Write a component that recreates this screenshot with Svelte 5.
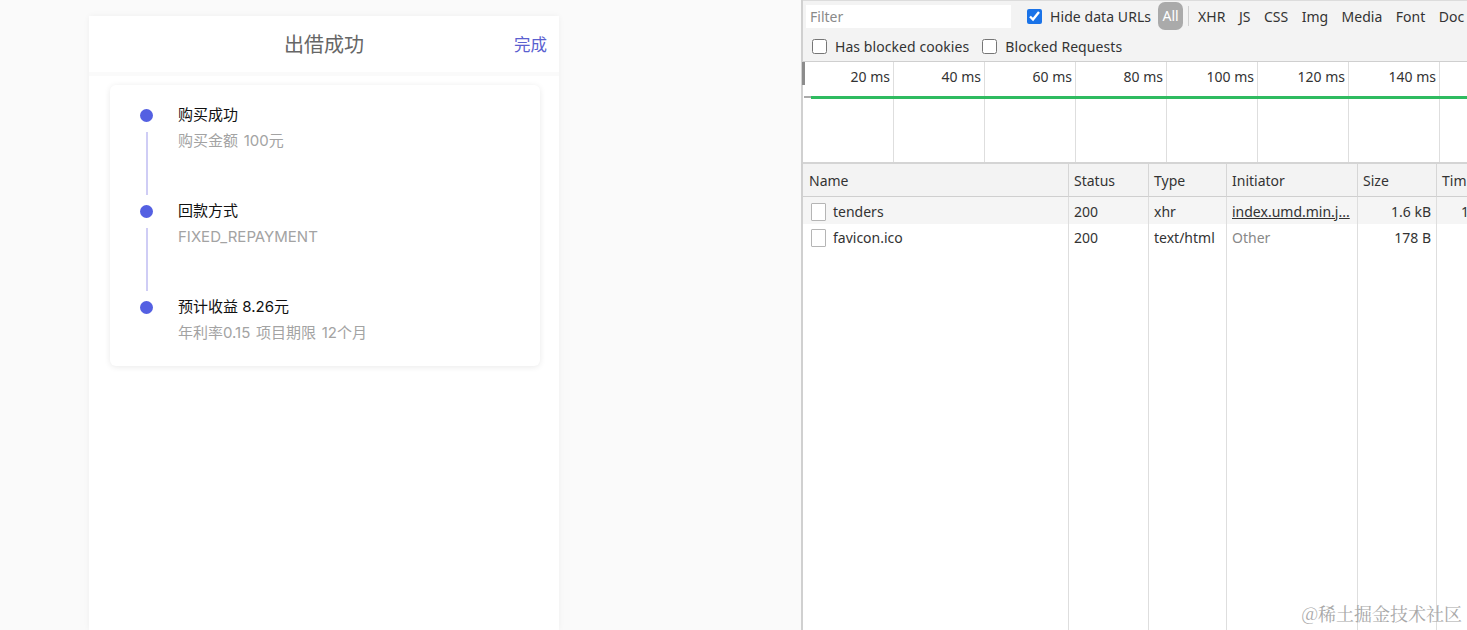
<script>
  const steps = [
    { title: '购买成功', sub: '购买金额 100元' },
    { title: '回款方式', sub: 'FIXED_REPAYMENT' },
    { title: '预计收益 8.26元', sub: '年利率0.15 项目期限 12个月' }
  ];
  const types = ['XHR', 'JS', 'CSS', 'Img', 'Media', 'Font', 'Doc'];
  const ticks = ['20 ms', '40 ms', '60 ms', '80 ms', '100 ms', '120 ms', '140 ms'];
  const rows = [
    { name: 'tenders', status: '200', type: 'xhr', initiator: 'index.umd.min.j...', size: '1.6 kB', time: '1', link: true },
    { name: 'favicon.ico', status: '200', type: 'text/html', initiator: 'Other', size: '178 B', time: '', link: false }
  ];
</script>

<div class="page">
  <section class="left">
    <div class="phone">
      <header class="nav">
        <h1>出借成功</h1>
        <span class="done">完成</span>
      </header>
      <div class="body">
        <div class="card">
          {#each steps as step, i}
            <div class="step">
              <div class="rail">
                <span class="dot"></span>
                {#if i < steps.length - 1}<span class="line"></span>{/if}
              </div>
              <div class="copy">
                <div class="title">{step.title}</div>
                <div class="sub">{step.sub}</div>
              </div>
            </div>
          {/each}
        </div>
      </div>
    </div>
  </section>

  <section class="devtools">
    <div class="toolbar">
      <div class="bar-row">
        <div class="filter">Filter</div>
        <label class="check first"><input type="checkbox" checked />Hide data URLs</label>
        <span class="all">All</span>
        <span class="sep"></span>
        {#each types as t}
          <span class="type-btn">{t}</span>
        {/each}
      </div>
      <div class="bar-row second">
        <label class="check"><input type="checkbox" />Has blocked cookies</label>
        <label class="check"><input type="checkbox" />Blocked Requests</label>
      </div>
    </div>

    <div class="overview">
      <span class="handle"></span>
      <span class="stub"></span>
      <span class="green"></span>
      {#each ticks as t}
        <div class="tick">{t}</div>
      {/each}
      <div class="tick"></div>
    </div>

    <div class="table">
      <div class="th first-col">Name</div>
      <div class="th">Status</div>
      <div class="th">Type</div>
      <div class="th">Initiator</div>
      <div class="th">Size</div>
      <div class="th">Tim</div>
      {#each rows as r, i}
        <div class="td name" class:odd={i === 0}><span class="file"></span>{r.name}</div>
        <div class="td" class:odd={i === 0}>{r.status}</div>
        <div class="td" class:odd={i === 0}>{r.type}</div>
        <div class="td" class:odd={i === 0} class:link={r.link} class:muted={!r.link}>{r.initiator}</div>
        <div class="td right" class:odd={i === 0}>{r.size}</div>
        <div class="td right" class:odd={i === 0}>{r.time}</div>
      {/each}
      {#each Array(6) as _}
        <div class="fill"></div>
      {/each}
    </div>
    <div class="watermark">@稀土掘金技术社区</div>
  </section>
</div>

<style>
  :global(body) {
    margin: 0;
    background: #fff;
    overflow: hidden;
  }

  .page {
    display: flex;
    width: 1467px;
    height: 630px;
    overflow: hidden;
    font-family: 'Noto Sans', 'Noto Sans CJK SC', sans-serif;
  }

  .left {
    width: 801px;
    flex: none;
    box-sizing: border-box;
    padding: 16px 0 0 89px;
    background: #fafafa;
  }

  .phone {
    width: 470px;
    height: 614px;
    display: flex;
    flex-direction: column;
    gap: 4px;
    box-shadow: 0 0 6px rgba(0, 0, 0, 0.05);
    border-radius: 3px 3px 0 0;
    font-family: 'Inter', 'Noto Sans CJK SC', sans-serif;
  }

  .nav {
    height: 56px;
    box-sizing: border-box;
    padding-bottom: 2px;
    background: #fff;
    display: flex;
    align-items: center;
    justify-content: center;
    position: relative;
    flex: none;
  }

  h1 {
    margin: 0;
    font-size: 20px;
    font-weight: 400;
    color: #666;
  }

  .done {
    position: absolute;
    right: 12px;
    top: 17px;
    font-size: 16.5px;
    line-height: 24px;
    color: #5a60cf;
  }

  .body {
    flex: 1;
    background: #fff;
    padding: 9px 19px 0 21px;
  }

  .card {
    height: 281px;
    box-sizing: border-box;
    padding: 17px 0 0 30px;
    background: #fff;
    border-radius: 6px;
    box-shadow: 0 1px 6px rgba(0, 0, 0, 0.09);
  }

  .step {
    display: flex;
    height: 96px;
  }

  .rail {
    width: 13px;
    display: flex;
    flex-direction: column;
    align-items: center;
    flex: none;
  }

  .dot {
    width: 13px;
    height: 13px;
    margin-top: 7px;
    border-radius: 50%;
    background: #5460e2;
    flex: none;
  }

  .line {
    width: 2px;
    height: 63px;
    margin-top: 10px;
    background: #cfcdf5;
  }

  .copy {
    margin-left: 25px;
    font-size: 15px;
    line-height: 26px;
  }

  .title {
    color: #111;
  }

  .sub {
    color: #a3a3a3;
    word-spacing: 1.5px;
  }

  .devtools {
    flex: 1;
    min-width: 0;
    display: flex;
    flex-direction: column;
    position: relative;
    border-left: 2px solid #d0d0d0;
    background: #fff;
    font-size: 14px;
    color: #333;
  }

  .toolbar {
    height: 62px;
    box-sizing: border-box;
    background: #f3f3f3;
    border-top: 1px solid #dcdcdc;
    border-bottom: 1px solid #cfcfcf;
    flex: none;
    padding-top: 1px;
  }

  .bar-row {
    display: flex;
    align-items: center;
    height: 28px;
    white-space: nowrap;
    padding-left: 3px;
  }

  .bar-row > * {
    flex: none;
  }

  .bar-row.second {
    margin-top: 2px;
    padding-left: 9px;
    gap: 13px;
  }

  .filter {
    width: 201px;
    height: 23px;
    padding-left: 4px;
    line-height: 23px;
    background: #fff;
    color: #8a8a8a;
  }

  .check {
    display: flex;
    align-items: center;
    letter-spacing: 0.07px;
  }

  .check.first {
    margin-left: 16px;
  }

  input {
    width: 15px;
    height: 15px;
    margin: 0 8px 0 0;
    accent-color: #1a73e8;
  }

  .all {
    width: 25px;
    height: 28px;
    margin-left: 7px;
    border-radius: 7px;
    background: #aaa;
    color: #fff;
    line-height: 28px;
    text-align: center;
  }

  .sep {
    width: 1px;
    height: 20px;
    margin: 0 9px 0 5px;
    background: #d0d0d0;
  }

  .type-btn {
    margin-right: 13.5px;
    color: #333;
  }

  .overview {
    height: 100px;
    flex: none;
    display: flex;
    position: relative;
    border-bottom: 2px solid #d4d4d4;
  }

  .handle {
    position: absolute;
    left: -1px;
    top: 0;
    width: 3px;
    height: 23px;
    background: #8c8c8c;
  }

  .stub {
    position: absolute;
    left: 1px;
    top: 34px;
    width: 8px;
    height: 2px;
    background: #aaa;
  }

  .green {
    position: absolute;
    left: 8px;
    right: 0;
    top: 34px;
    height: 3px;
    background: #2fbb60;
    z-index: 1;
  }

  .tick {
    width: 91px;
    flex: none;
    box-sizing: border-box;
    padding: 5px 3px 0 0;
    text-align: right;
    line-height: 20px;
    border-right: 1px solid #dedede;
    white-space: nowrap;
    color: #333;
  }

  .table {
    flex: 1;
    min-height: 0;
    display: grid;
    grid-template-columns: 266px 80px 78px 131px 79px 38px;
    grid-template-rows: 33px 27px 26px 1fr;
  }

  .th {
    background: #f3f3f3;
    border-bottom: 1px solid #cfcfcf;
    border-right: 1px solid #d6d6d6;
    padding-left: 5px;
    line-height: 34px;
    white-space: nowrap;
    overflow: hidden;
  }

  .th.first-col {
    padding-left: 6px;
  }

  .td {
    padding: 2px 5px 0;
    line-height: 24px;
    border-right: 1px solid #dedede;
    white-space: nowrap;
    overflow: hidden;
  }

  .td.odd {
    padding-top: 3px;
    background: #f5f5f5;
  }

  .td.right {
    text-align: right;
  }

  .td.link {
    text-decoration: underline;
  }

  .td.muted {
    color: #888;
  }

  .td.name {
    display: flex;
    align-items: center;
    padding-left: 8px;
  }

  .file {
    width: 13px;
    height: 16px;
    margin-right: 7px;
    background: #fff;
    border: 1px solid #b5b5b5;
    border-radius: 1px;
    flex: none;
  }

  .fill {
    border-right: 1px solid #dedede;
  }

  .watermark {
    position: absolute;
    right: 5px;
    bottom: 5px;
    font-family: 'Noto Serif CJK SC', 'Noto Sans CJK SC', serif;
    font-size: 18px;
    line-height: 24px;
    color: #a8a8a8;
  }
</style>
